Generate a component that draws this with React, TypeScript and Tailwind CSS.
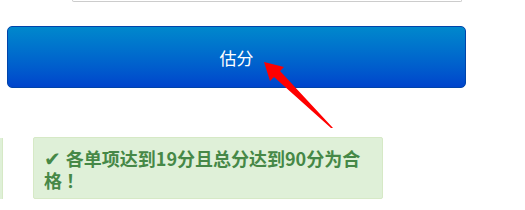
export default function App() {
  return (
    <div className="relative w-[525px] h-[210px] overflow-hidden bg-white font-['Noto_Sans_CJK_SC','Noto_Sans',sans-serif]">
      {/* bottom edge of the input above */}
      <div className="ml-[72px] w-[390px] h-[2px] border-b border-x border-[#cccccc] rounded-b-[3px]" />

      <button
        type="button"
        className="mt-[24px] ml-[7px] w-[459px] h-[62px] rounded-[5px] border border-[#0044aa] bg-gradient-to-b from-[#0088cc] to-[#0044cc] text-white text-[17px] leading-none flex items-center justify-center"
      >
        估分
      </button>

      <div className="mt-[49px] flex items-start">
        <div className="w-[3px] h-[61px] mt-[1px] bg-[#dff0d8] border-r border-[#d6e9c6]" />
        <div className="ml-[30px] w-[350px] h-[62px] border border-[#d6e9c6] bg-[#dff0d8] rounded-[2px] pl-[10px] pr-[14px] pt-[9px] text-[#468847] text-[18px] leading-[22px] font-bold">
          <span className="inline-block mr-[5px] font-['DejaVu_Sans',sans-serif] text-[20px] leading-[20px]">✔</span>各单项达到19分且总分达到90分为合格 ！
        </div>
      </div>

      <svg
        className="absolute left-0 top-0 pointer-events-none"
        width="525"
        height="210"
        viewBox="0 0 525 210"
      >
        <polygon
          points="264,62 284,67 280,71 333,128 331,128 274,77 270,81"
          fill="#ff0000"
        />
      </svg>
    </div>
  );
}
